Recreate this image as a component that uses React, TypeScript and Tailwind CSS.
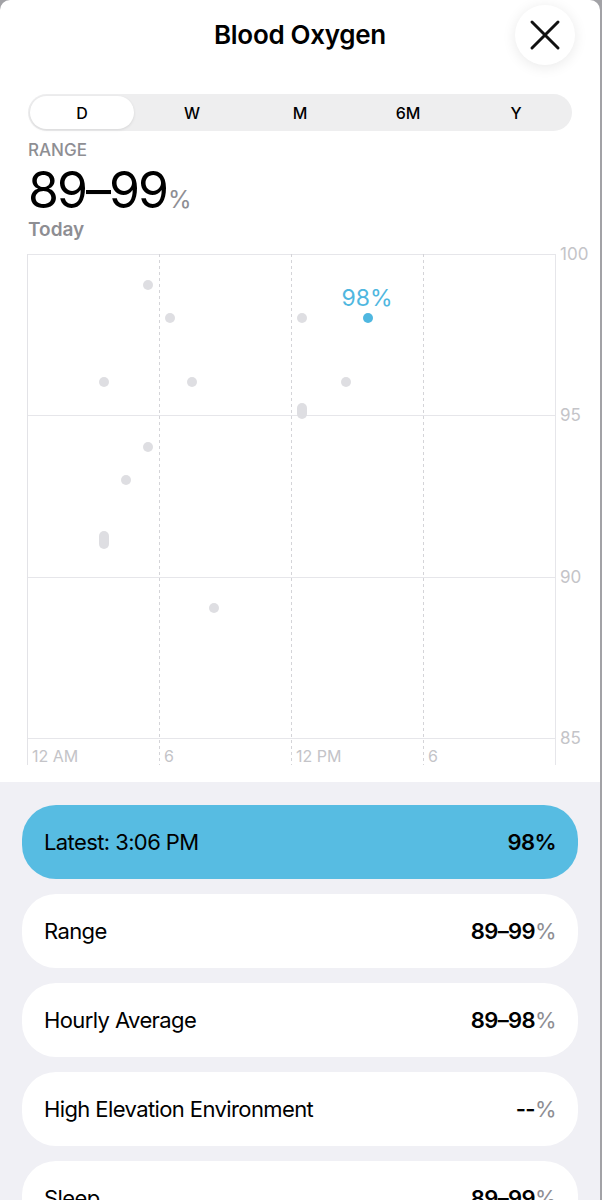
import React from "react";

const FONT = { fontFamily: "Inter, 'Noto Sans', 'Liberation Sans', sans-serif" };

const grayDots: Array<[number, number]> = [
  [148, 285],
  [170, 318],
  [302, 318],
  [104, 382],
  [192, 382],
  [346, 382],
  [148, 447],
  [126, 480],
  [214, 608],
];

const OFF = 244;

function Chart() {
  const hLines = [254, 415, 577, 738];
  const yLabels = ["100", "95", "90", "85"];
  const vDashed = [159, 291, 423];
  const xLabels: Array<[number, string]> = [
    [32, "12 AM"],
    [164, "6"],
    [296, "12 PM"],
    [428, "6"],
  ];
  return (
    <svg width={600} height={538} viewBox="0 0 600 538" className="block">
      {hLines.map((y) => (
        <line key={y} x1={27} x2={555} y1={y - OFF + 0.5} y2={y - OFF + 0.5} stroke="#e6e6ea" strokeWidth={1} />
      ))}
      <line x1={27.5} x2={27.5} y1={254 - OFF} y2={765 - OFF} stroke="#e3e3e7" strokeWidth={1} />
      <line x1={555.5} x2={555.5} y1={254 - OFF} y2={765 - OFF} stroke="#e6e6ea" strokeWidth={1} />
      {vDashed.map((x) => (
        <line
          key={x}
          x1={x + 0.5}
          x2={x + 0.5}
          y1={254 - OFF}
          y2={765 - OFF}
          stroke="#d4d4d8"
          strokeWidth={1}
          strokeDasharray="3 3"
        />
      ))}
      {hLines.map((y, i) => (
        <text
          key={"yl" + y}
          x={560}
          y={y - OFF}
          dominantBaseline="central"
          fontSize={17}
          fill="#c4c4c8"
          style={FONT}
        >
          {yLabels[i]}
        </text>
      ))}
      {xLabels.map(([x, t], i) => (
        <text key={"xl" + i} x={x} y={762 - OFF} fontSize={16} fill="#c4c4c8" style={FONT}>
          {t}
        </text>
      ))}
      {grayDots.map(([x, y], i) => (
        <circle key={i} cx={x} cy={y - OFF} r={5} fill="#dedee2" />
      ))}
      <rect x={297} y={403 - OFF} width={10} height={16} rx={5} fill="#dedee2" />
      <rect x={99} y={531 - OFF} width={10} height={18} rx={5} fill="#dedee2" />
      <circle cx={368} cy={318 - OFF} r={5} fill="#4fb7e0" />
      <text x={367} y={306 - OFF} textAnchor="middle" fontSize={23} fill="#4fb7e0" style={FONT}>
        98%
      </text>
    </svg>
  );
}

function Row({
  label,
  value,
  pct = true,
  highlight = false,
}: {
  label: string;
  value: string;
  pct?: boolean;
  highlight?: boolean;
}) {
  return (
    <div
      className={`h-[74px] shrink-0 rounded-[34px] px-[22px] flex items-center justify-between text-[22px] tracking-[-0.6px] text-black ${
        highlight ? "bg-[#57bce2]" : "bg-white"
      }`}
    >
      <span>{label}</span>
      <span className="font-semibold">
        {value}
        {pct && <span className={highlight ? "font-semibold" : "font-normal text-[#8e8e93]"}>%</span>}
      </span>
    </div>
  );
}

export default function App() {
  const segs = ["D", "W", "M", "6M", "Y"];
  return (
    <div className="w-[602px] h-[1200px] bg-[#a2a2a6] overflow-hidden" style={FONT}>
      <div className="w-[600px] h-[1200px] bg-white rounded-t-[10px] flex flex-col overflow-hidden relative">
        {/* header */}
        <div className="h-[94px] shrink-0 relative">
          <div className="pt-[18px] text-center text-[26px] leading-[34px] font-semibold text-black tracking-[-0.3px]">
            Blood Oxygen
          </div>
          <div className="absolute right-[25px] top-[5px] w-[60px] h-[60px] rounded-full bg-white shadow-[0_2px_14px_rgba(0,0,0,0.09)] flex items-center justify-center">
            <svg width={32} height={32} viewBox="0 0 32 32">
              <path d="M3 3 L29 29 M29 3 L3 29" stroke="#111" strokeWidth={3} strokeLinecap="round" fill="none" />
            </svg>
          </div>
        </div>
        {/* segmented control */}
        <div className="shrink-0 mx-[28px] h-[37px] rounded-full bg-[#eeeeef] p-[2px] grid grid-cols-5">
          {segs.map((s, i) => (
            <div
              key={s}
              className={`flex items-center justify-center text-[16px] font-medium text-black rounded-full ${
                i === 0 ? "bg-white shadow-[0_1px_3px_rgba(0,0,0,0.1)] mr-[4px]" : ""
              }`}
            >
              {s}
            </div>
          ))}
        </div>
        {/* range */}
        <div className="shrink-0 px-[28px]">
          <div className="mt-[10px] text-[17px] leading-[18px] text-[#8e8e93] font-medium">RANGE</div>
          <div className="mt-[6px] h-[50px] leading-[50px] text-black flex items-baseline">
            <span className="text-[50px] tracking-[-2px]">89–99</span>
            <span className="text-[24px] text-[#8e8e93] ml-[1px]">%</span>
          </div>
          <div className="mt-[3px] text-[19px] leading-[24px] font-semibold text-[#8e8e93]">Today</div>
        </div>
        <div className="shrink-0 mt-[2px]">
          <Chart />
        </div>
        {/* list */}
        <div className="flex-1 shrink-0 bg-[#f0f0f5] pt-[23px] px-[22px] flex flex-col gap-[15px]">
          <Row label="Latest: 3:06 PM" value="98" highlight />
          <Row label="Range" value="89–99" />
          <Row label="Hourly Average" value="89–98" />
          <Row label="High Elevation Environment" value="--" />
          <Row label="Sleep" value="89–99" />
        </div>
      </div>
    </div>
  );
}
